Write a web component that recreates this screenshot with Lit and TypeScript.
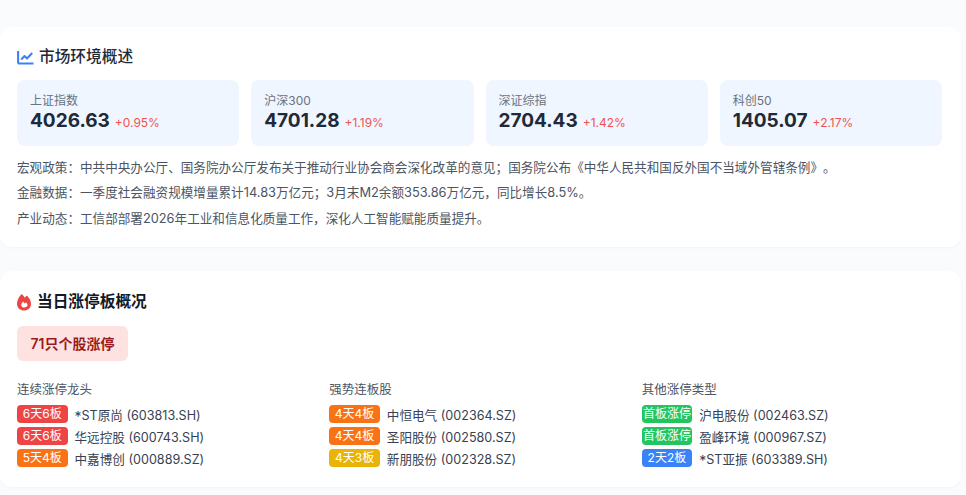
import { LitElement, html, css, svg } from "lit";
import { customElement } from "lit/decorators.js";

const indices = [
  { name: "上证指数", value: "4026.63", change: "+0.95%" },
  { name: "沪深300", value: "4701.28", change: "+1.19%" },
  { name: "深证综指", value: "2704.43", change: "+1.42%" },
  { name: "科创50", value: "1405.07", change: "+2.17%" },
];
const notes = [
  "宏观政策\uFF1A中共中央办公厅、国务院办公厅发布关于推动行业协会商会深化改革的意见\uFF1B国务院公布《中华人民共和国反外国不当域外管辖条例》。",
  "金融数据\uFF1A一季度社会融资规模增量累计14.83万亿元\uFF1B3月末M2余额353.86万亿元\uFF0C同比增长8.5%。",
  "产业动态\uFF1A工信部部署2026年工业和信息化质量工作\uFF0C深化人工智能赋能质量提升。",
];
const groups = [
  {
    title: "连续涨停龙头",
    rows: [
      ["red", "6天6板", "*ST原尚 (603813.SH)"],
      ["red", "6天6板", "华远控股 (600743.SH)"],
      ["orange", "5天4板", "中嘉博创 (000889.SZ)"],
    ],
  },
  {
    title: "强势连板股",
    rows: [
      ["orange", "4天4板", "中恒电气 (002364.SZ)"],
      ["orange", "4天4板", "圣阳股份 (002580.SZ)"],
      ["yellow", "4天3板", "新朋股份 (002328.SZ)"],
    ],
  },
  {
    title: "其他涨停类型",
    rows: [
      ["green", "首板涨停", "沪电股份 (002463.SZ)"],
      ["green", "首板涨停", "盈峰环境 (000967.SZ)"],
      ["blue", "2天2板", "*ST亚振 (603389.SH)"],
    ],
  },
];

const chartIcon = svg`<svg class="icon" width="17" height="15" viewBox="0 0 17 15" fill="none" stroke="#3b82f6" stroke-width="2.100">
  <path d="M1.100 1v11a1.500 1.500 0 0 0 1.500 1.500H16.500"/>
  <path d="M4.200 9.600l3.300-3.600 2.500 2.400 5.200-5.300" stroke-linejoin="round"/>
</svg>`;
const fireIcon = svg`<svg class="icon" width="14" height="17" viewBox="0 0 14 17">
  <path fill="#ef4444" d="M4.100.5c.3-.3.800-.3 1.100 0 1 1 2 2.100 2.700 3.200.4-.6.900-1.200 1.300-1.600.3-.3.800-.3 1.100 0C12.400 4.100 14 7.200 14 9.700 14 13.700 10.900 16.500 7 16.500S0 13.700 0 9.700C0 6.300 1.900 2.700 4.100.5z"/>
  <path fill="#fff" d="M7.100 13.600c-1.700 0-2.900-1.100-2.900-2.600 0-1 .6-1.800 1.600-3 .2-.2.500-.2.700 0l1.300 1.600.9-1c.2-.2.400-.2.600 0 .8 1 1.200 1.800 1.200 2.500 0 1.500-1.400 2.500-3.400 2.500z"/>
</svg>`;

const nameWithStar = (t: string) =>
  t.startsWith("*") ? html`<span class="star">*</span>${t.slice(1)}` : t;

const noteParts = (t: string) =>
  t.split(/([0-9A-Za-z.%]+)/).map((p, i) => (i % 2 ? html`<span class="latin">${p}</span>` : p));

@customElement("app-root")
export class AppRoot extends LitElement {
  static styles = css`
    :host {
      display: block;
      width: 966px;
      height: 495px;
      overflow: hidden;
      box-sizing: border-box;
      padding: 27px 5px 0 0;
      background: #f9fbfd;
      font-family: Inter, "Noto Sans CJK SC", sans-serif;
      color: #1f2937;
    }
    .card {
      background: #fff;
      border-radius: 12px;
      box-shadow: 0 1px 3px rgba(0, 0, 0, 0.03);
      padding: 0 19px 0 17px;
      box-sizing: border-box;
    }
    .market { height: 220px; padding-top: 18px; margin-bottom: 24px; }
    .limit { height: 216px; padding-top: 19px; }
    h2 {
      margin: 0;
      font-size: 15.700px;
      line-height: 24px;
      font-weight: 500;
      color: #1f2937;
      display: flex;
      align-items: center;
    }
    .market h2 { gap: 5px; height: 24px; margin-bottom: 11px; }
    .limit h2 { gap: 6px; color: #111827; font-weight: 600; margin-bottom: 12px; }
    .icon { flex: none; display: block; }
    .indices {
      display: grid;
      grid-template-columns: repeat(4, 1fr);
      gap: 12px;
    }
    .index {
      background: #eff6ff;
      border-radius: 8px;
      height: 66px;
      padding: 13px 13px 0;
      box-sizing: border-box;
    }
    .index .name { font-size: 12px; line-height: 16px; color: #6b7280; }
    .index .line { display: flex; align-items: baseline; gap: 5px; line-height: 24px; }
    .index .value { font-size: 19px; font-weight: 700; color: #1f2937; }
    .index .change { font-size: 12px; color: #ef5350; }
    .notes { margin-top: 9px; }
    .notes div {
      font-size: 12.600px;
      line-height: 25.300px;
      color: #4b5563;
      white-space: nowrap;
      text-spacing-trim: space-all;
    }
    .latin { font-size: 12.800px; }
    .pill {
      display: inline-block;
      background: #fee2e2;
      color: #991b1b;
      font-size: 14px;
      font-weight: 600;
      line-height: 35px;
      height: 35px;
      padding: 0 13.500px;
      border-radius: 6px;
    }
    .groups {
      display: grid;
      grid-template-columns: repeat(3, 1fr);
      gap: 12px;
      margin-top: 19px;
    }
    .group h3 {
      margin: 0 0 3px;
      font-size: 12.500px;
      line-height: 20px;
      font-weight: 400;
      color: #4b5563;
    }
    .row { display: flex; align-items: center; gap: 7px; height: 22px; font-size: 12.600px; color: #374151; white-space: nowrap; }
    .star { font-size: 14px; line-height: 1; vertical-align: -2px; }
    .badge {
      min-width: 50.500px;
      height: 18.500px;
      line-height: 18.500px;
      text-align: center;
      font-size: 12px;
      color: #fff;
      border-radius: 4px;
      flex: none;
    }
    .red { background: #ef4444; }
    .orange { background: #f97316; }
    .yellow { background: #eab308; }
    .green { background: #22c55e; }
    .blue { background: #3b82f6; }
  `;

  render() {
    return html`
      <section class="card market">
        <h2>${chartIcon}<span>市场环境概述</span></h2>
        <div class="indices">
          ${indices.map(
            (i) => html`<div class="index">
              <div class="name">${i.name}</div>
              <div class="line"><span class="value">${i.value}</span><span class="change">${i.change}</span></div>
            </div>`
          )}
        </div>
        <div class="notes">${notes.map((n) => html`<div>${noteParts(n)}</div>`)}</div>
      </section>
      <section class="card limit">
        <h2>${fireIcon}<span>当日涨停板概况</span></h2>
        <div class="pill">71只个股涨停</div>
        <div class="groups">
          ${groups.map(
            (g) => html`<div class="group">
              <h3>${g.title}</h3>
              ${g.rows.map(
                (r) => html`<div class="row"><span class="badge ${r[0]}">${r[1]}</span><span>${nameWithStar(r[2])}</span></div>`
              )}
            </div>`
          )}
        </div>
      </section>
    `;
  }
}
